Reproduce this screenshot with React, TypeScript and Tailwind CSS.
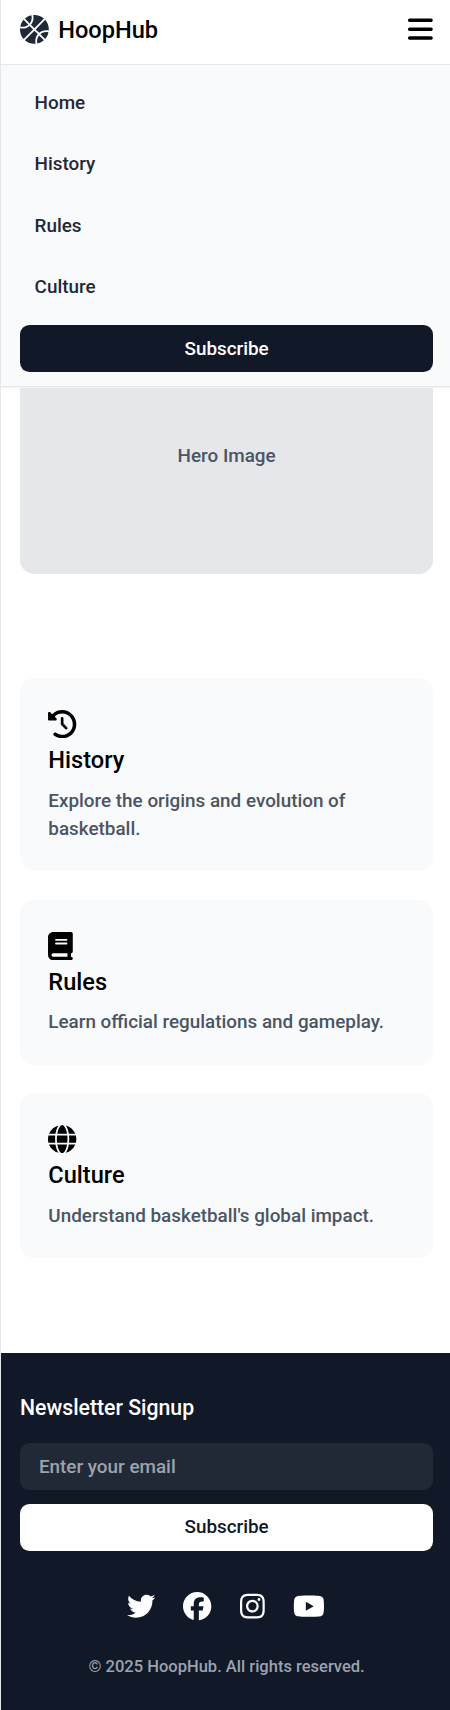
import type { IconType } from "react-icons";
import {
  FaBars,
  FaBasketball,
  FaBook,
  FaClockRotateLeft,
  FaFacebook,
  FaGlobe,
  FaInstagram,
  FaTwitter,
  FaYoutube,
} from "react-icons/fa6";

const links = ["Home", "History", "Rules", "Culture"];

const topics: { title: string; text: string; icon: IconType; size: string }[] = [
  {
    title: "History",
    text: "Explore the origins and evolution of basketball.",
    icon: FaClockRotateLeft,
    size: "h-[28.32px] w-[28.32px]",
  },
  { title: "Rules", text: "Learn official regulations and gameplay.", icon: FaBook, size: "h-[28.32px] w-[24.78px]" },
  { title: "Culture", text: "Understand basketball's global impact.", icon: FaGlobe, size: "h-[28.32px] w-[28.32px]" },
];

const socials: { name: string; icon: IconType; size: string }[] = [
  { name: "Twitter", icon: FaTwitter, size: "h-[28.32px] w-[28.32px]" },
  { name: "Facebook", icon: FaFacebook, size: "h-[28.32px] w-[28.32px]" },
  { name: "Instagram", icon: FaInstagram, size: "h-[28.32px] w-[24.78px]" },
  { name: "YouTube", icon: FaYoutube, size: "h-[28.32px] w-[31.86px]" },
];

function Header() {
  return (
    <header className="relative">
      <div className="flex h-[65px] items-center justify-between border-b border-gray-200 bg-white pl-[19px] pr-[16.8px] pb-[5px]">
        <div className="flex items-center gap-[9.44px]">
          <FaBasketball className="h-[28.8px] w-[28.8px] text-[#1f2937]" />
          <span className="pt-px text-[23.6px] leading-[33px]">HoopHub</span>
        </div>
        <button aria-label="Menu">
          <FaBars className="h-[28.32px] w-[24.78px]" />
        </button>
      </div>
      <nav className="absolute inset-x-0 top-full flex h-[322px] flex-col border-b border-gray-200 bg-[#f9fafc] pl-[19px] pr-[16.8px] pt-[14.5px] shadow-[0_1px_0_#f3f4f6]">
        {links.map((label) => (
          <a key={label} href="#" className="mb-[14.16px] px-[14.6px] py-[9.44px] leading-[28.32px] text-[#1f2937]">
            {label}
          </a>
        ))}
        <button className="h-[47.2px] shrink-0 rounded-[9.44px] bg-[#111827] pt-px text-white">Subscribe</button>
      </nav>
    </header>
  );
}

export default function App() {
  return (
    <div className="h-[1710px] overflow-hidden border-l border-[#e5e7eb] bg-white font-['Roboto',sans-serif] text-[18.88px] font-medium leading-[28.32px] text-black">
      <Header />
      <main className="pl-[19px] pr-[16.8px]">
        <section className="pt-[272.7px]">
          <div className="flex h-[236px] items-center justify-center rounded-[14.16px] bg-[#e5e7eb] text-[#4b5563]">
            Hero Image
          </div>
        </section>
        <section className="flex flex-col gap-[28.32px] pt-[104.3px] pb-[94.4px]">
          {topics.map(({ title, text, icon: Icon, size }) => (
            <article key={title} className="rounded-[14.16px] bg-[#f9fafc] p-[28.32px]">
              <div className="flex h-[37.76px] items-start pt-[3.6px]">
                <Icon className={size} />
              </div>
              <h2 className="mb-[9.44px] text-[23.6px] leading-[33.04px]">{title}</h2>
              <p className="text-[#4b5563]">{text}</p>
            </article>
          ))}
        </section>
      </main>
      <footer className="h-[360px] bg-[#111827] pl-[19px] pr-[16.8px] pt-[37.76px] text-white">
        <h3 className="mb-[18.88px] text-[21.24px] leading-[33.04px]">Newsletter Signup</h3>
        <form className="flex flex-col gap-[14.16px]">
          <input
            type="email"
            placeholder="Enter your email"
            className="h-[47.2px] rounded-[9.44px] bg-[#222936] px-[18.88px] placeholder:text-[#9ca3af]"
          />
          <button type="button" className="h-[47.2px] rounded-[9.44px] bg-white text-[#111827]">
            Subscribe
          </button>
        </form>
        <div className="mt-[37.76px] flex h-[37.76px] items-start justify-center gap-[28.32px] pt-[3.6px] pr-[1.4px]">
          {socials.map(({ name, icon: Icon, size }) => (
            <a key={name} href="#" aria-label={name}>
              <Icon className={size} />
            </a>
          ))}
        </div>
        <p className="mt-[28.6px] text-center text-[16.52px] leading-[23.6px] text-[#9ca3af]">
          © 2025 HoopHub. All rights reserved.
        </p>
      </footer>
    </div>
  );
}
